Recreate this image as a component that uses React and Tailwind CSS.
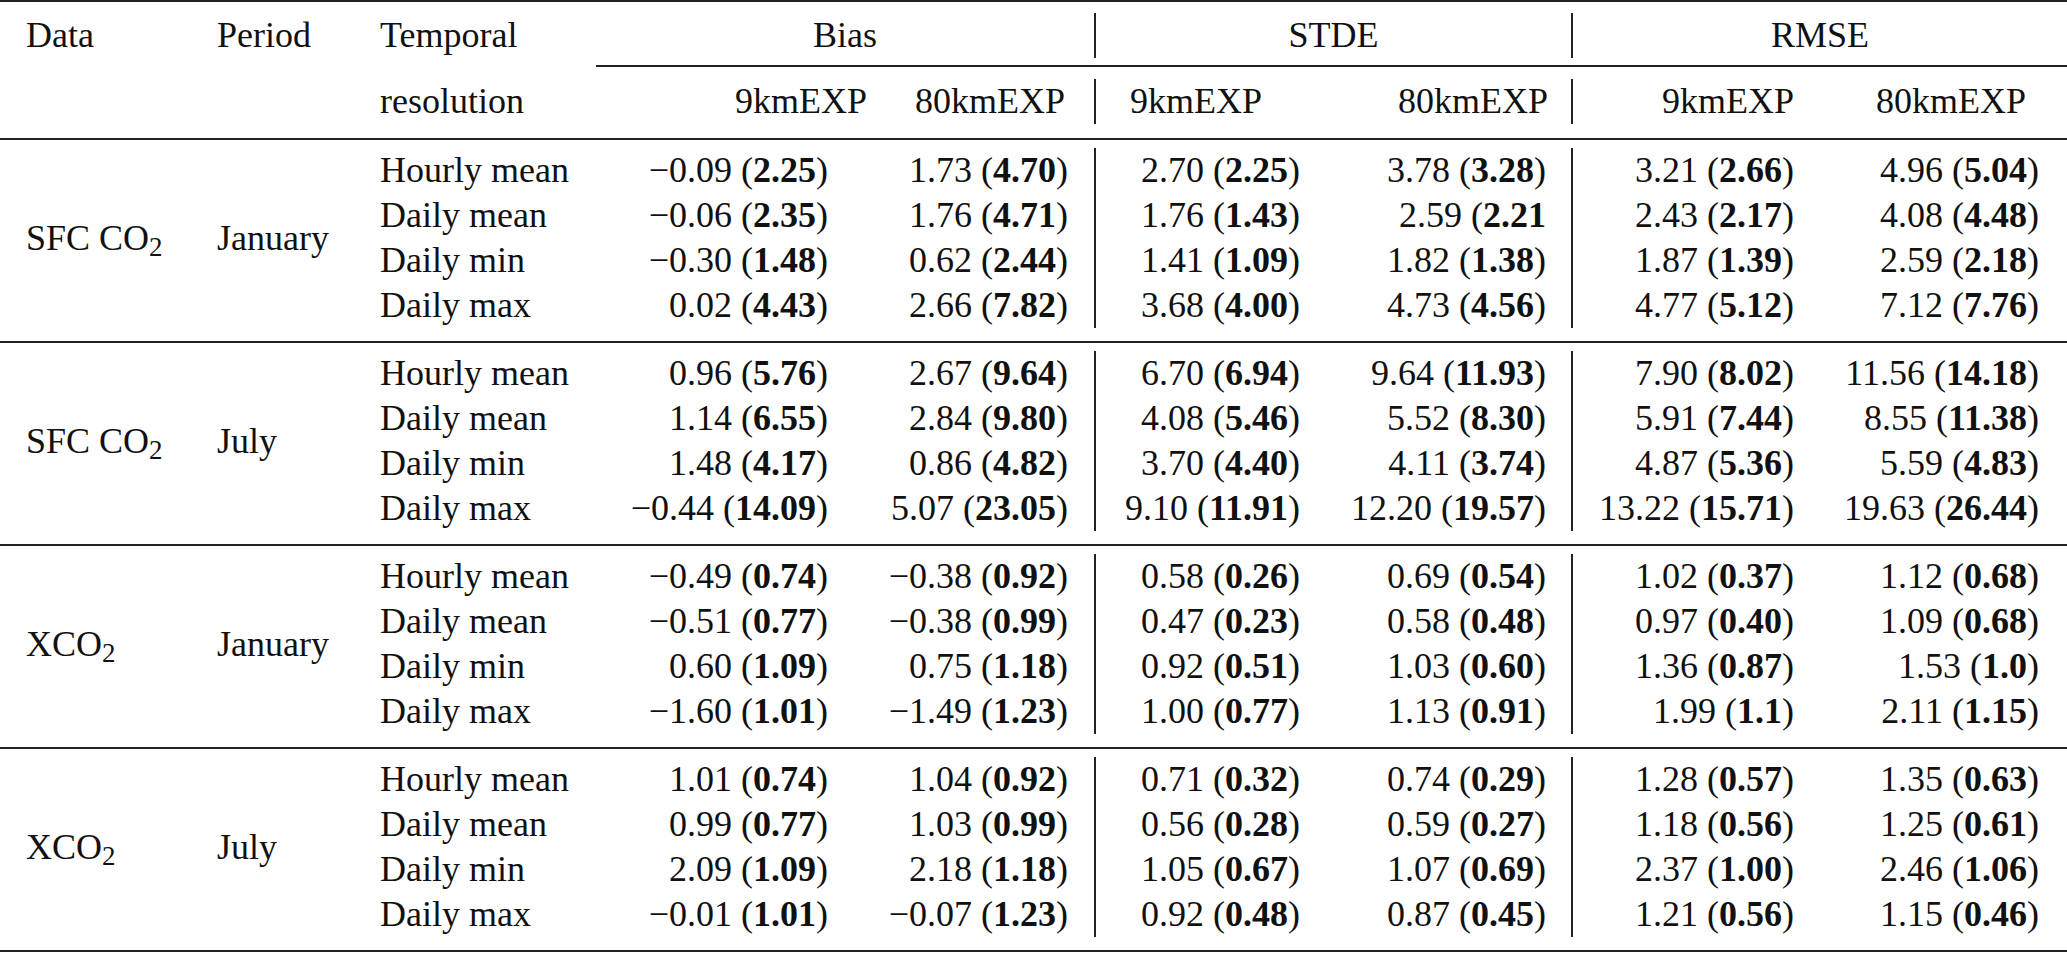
import React from "react";

const COLS = "grid grid-cols-[217px_163px_216px_272px_226px_236px_241px_248px_248px]";

// right padding of the value cells, one per numeric column
const VALUE_PAD = ["pr-[40px]", "pr-[26px]", "pr-[30px] border-l-2 border-[#222]", "pr-[25px]", "pr-[25px] border-l-2 border-[#222]", "pr-[28px]"];
const HEAD_PAD = ["pr-[1px]", "pr-[29px]", "pr-[68px] border-l-2 border-[#222]", "pr-[23px]", "pr-[25px] border-l-2 border-[#222]", "pr-[41px]"];

const M = "\u2212";

const sections = [
  {
    data: "SFC",
    period: "January",
    rows: [
      ["Hourly mean", [[M + "0.09", "2.25"], ["1.73", "4.70"], ["2.70", "2.25"], ["3.78", "3.28"], ["3.21", "2.66"], ["4.96", "5.04"]]],
      ["Daily mean", [[M + "0.06", "2.35"], ["1.76", "4.71"], ["1.76", "1.43"], ["2.59", "2.21", ""], ["2.43", "2.17"], ["4.08", "4.48"]]],
      ["Daily min", [[M + "0.30", "1.48"], ["0.62", "2.44"], ["1.41", "1.09"], ["1.82", "1.38"], ["1.87", "1.39"], ["2.59", "2.18"]]],
      ["Daily max", [["0.02", "4.43"], ["2.66", "7.82"], ["3.68", "4.00"], ["4.73", "4.56"], ["4.77", "5.12"], ["7.12", "7.76"]]],
    ],
  },
  {
    data: "SFC",
    period: "July",
    rows: [
      ["Hourly mean", [["0.96", "5.76"], ["2.67", "9.64"], ["6.70", "6.94"], ["9.64", "11.93"], ["7.90", "8.02"], ["11.56", "14.18"]]],
      ["Daily mean", [["1.14", "6.55"], ["2.84", "9.80"], ["4.08", "5.46"], ["5.52", "8.30"], ["5.91", "7.44"], ["8.55", "11.38"]]],
      ["Daily min", [["1.48", "4.17"], ["0.86", "4.82"], ["3.70", "4.40"], ["4.11", "3.74"], ["4.87", "5.36"], ["5.59", "4.83"]]],
      ["Daily max", [[M + "0.44", "14.09"], ["5.07", "23.05"], ["9.10", "11.91"], ["12.20", "19.57"], ["13.22", "15.71"], ["19.63", "26.44"]]],
    ],
  },
  {
    data: "X",
    period: "January",
    rows: [
      ["Hourly mean", [[M + "0.49", "0.74"], [M + "0.38", "0.92"], ["0.58", "0.26"], ["0.69", "0.54"], ["1.02", "0.37"], ["1.12", "0.68"]]],
      ["Daily mean", [[M + "0.51", "0.77"], [M + "0.38", "0.99"], ["0.47", "0.23"], ["0.58", "0.48"], ["0.97", "0.40"], ["1.09", "0.68"]]],
      ["Daily min", [["0.60", "1.09"], ["0.75", "1.18"], ["0.92", "0.51"], ["1.03", "0.60"], ["1.36", "0.87"], ["1.53", "1.0"]]],
      ["Daily max", [[M + "1.60", "1.01"], [M + "1.49", "1.23"], ["1.00", "0.77"], ["1.13", "0.91"], ["1.99", "1.1"], ["2.11", "1.15"]]],
    ],
  },
  {
    data: "X",
    period: "July",
    rows: [
      ["Hourly mean", [["1.01", "0.74"], ["1.04", "0.92"], ["0.71", "0.32"], ["0.74", "0.29"], ["1.28", "0.57"], ["1.35", "0.63"]]],
      ["Daily mean", [["0.99", "0.77"], ["1.03", "0.99"], ["0.56", "0.28"], ["0.59", "0.27"], ["1.18", "0.56"], ["1.25", "0.61"]]],
      ["Daily min", [["2.09", "1.09"], ["2.18", "1.18"], ["1.05", "0.67"], ["1.07", "0.69"], ["2.37", "1.00"], ["2.46", "1.06"]]],
      ["Daily max", [[M + "0.01", "1.01"], [M + "0.07", "1.23"], ["0.92", "0.48"], ["0.87", "0.45"], ["1.21", "0.56"], ["1.15", "0.46"]]],
    ],
  },
];

function Species({ kind }) {
  return (
    <span>
      {kind === "SFC" ? "SFC CO" : "XCO"}
      <sub className="text-[27px]">2</sub>
    </span>
  );
}

function Section({ s }) {
  return (
    <div className={`${COLS} grid-rows-[45px_45px_45px_45px] border-t-2 border-[#222] pt-[8px] pb-[13px]`}>
      <div className="row-span-4 flex items-center pl-[26px]">
        <Species kind={s.data} />
      </div>
      <div className="row-span-4 col-start-2 flex items-center">{s.period}</div>
      {s.rows.map(([label, vals]) => (
        <React.Fragment key={label}>
          <div className="col-start-3 flex items-center">{label}</div>
          {vals.map(([a, b, close = ")"], i) => (
            <div key={i} className={`flex items-center justify-end whitespace-pre ${VALUE_PAD[i]}`}>
              {a} (<b className="font-bold">{b}</b>
              {close}
            </div>
          ))}
        </React.Fragment>
      ))}
    </div>
  );
}

export default function App() {
  return (
    <div className="min-h-screen bg-white font-serif">
      <div className="text-[#111] font-['Liberation_Serif'] text-[36px] leading-[45px]">
        <div className="border-t-2 border-b-2 border-[#222]">
          {/* group headings */}
          <div className={COLS}>
            <div className="pl-[26px] pt-[11px] pb-[9px]"><div className="h-[45px] flex items-center">Data</div></div>
            <div className="pt-[11px] pb-[9px]"><div className="h-[45px] flex items-center">Period</div></div>
            <div className="pt-[11px] pb-[9px]"><div className="h-[45px] flex items-center">Temporal</div></div>
            <div className="col-span-2 border-b-2 border-[#222] pt-[11px] pb-[7px]">
              <div className="h-[45px] flex items-center justify-center">Bias</div>
            </div>
            <div className="col-span-2 border-b-2 border-[#222] pt-[11px] pb-[7px]">
              <div className="h-[45px] flex items-center justify-center border-l-2 border-[#222]">STDE</div>
            </div>
            <div className="col-span-2 border-b-2 border-[#222] pt-[11px] pb-[7px]">
              <div className="h-[45px] flex items-center justify-center border-l-2 border-[#222]">RMSE</div>
            </div>
          </div>
          {/* run names */}
          <div className={COLS}>
            <div />
            <div />
            <div className="pt-[12px] pb-[14px]"><div className="h-[45px] flex items-center">resolution</div></div>
            {["9kmEXP", "80kmEXP", "9kmEXP", "80kmEXP", "9kmEXP", "80kmEXP"].map((h, i) => (
              <div key={i} className="pt-[12px] pb-[14px]">
                <div className={`h-[45px] flex items-center justify-end ${HEAD_PAD[i]}`}>{h}</div>
              </div>
            ))}
          </div>
        </div>
        <div className="border-b-2 border-[#222]">
          {sections.map((s, i) => (
            <div key={i} className={i === 0 ? "-mt-[2px]" : ""}>
              <Section s={s} />
            </div>
          ))}
        </div>
      </div>
    </div>
  );
}
